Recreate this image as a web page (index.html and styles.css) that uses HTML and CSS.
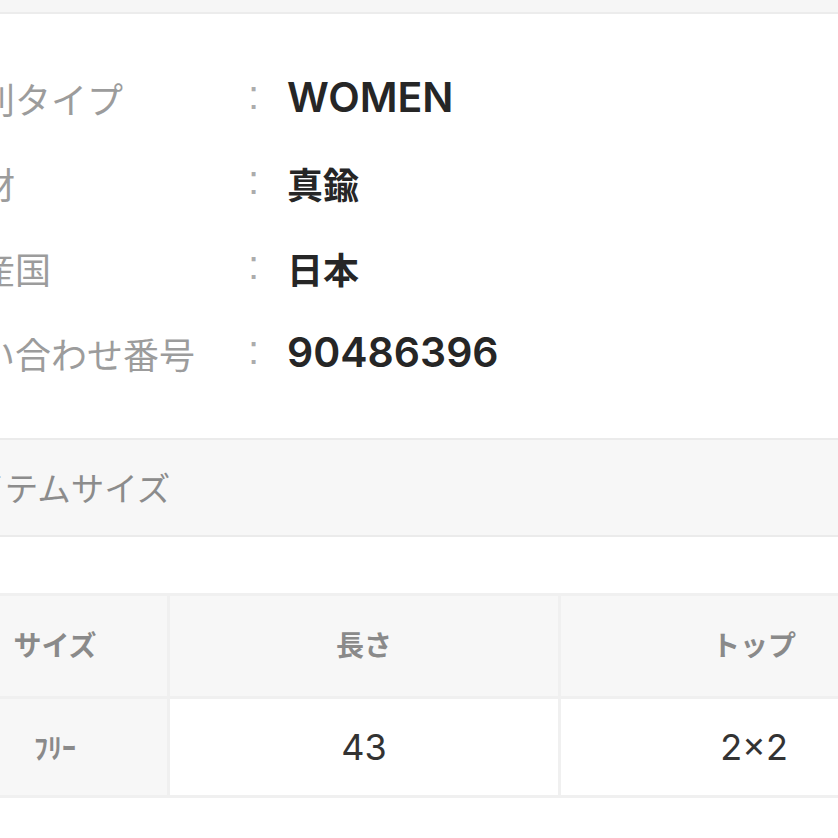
FILE: index.html
```html
<!DOCTYPE html>
<html lang="ja">
<head>
<meta charset="utf-8">
<link rel="stylesheet" href="styles.css">
</head>
<body>
<div class="page">
  <div class="topband"></div>
  <dl class="info">
    <div class="row"><dt class="label">性別タイプ</dt><dd class="colon">:</dd><dd class="value">WOMEN</dd></div>
    <div class="row"><dt class="label">素材</dt><dd class="colon">:</dd><dd class="value cjk">真鍮</dd></div>
    <div class="row"><dt class="label">生産国</dt><dd class="colon">:</dd><dd class="value cjk">日本</dd></div>
    <div class="row"><dt class="label">問い合わせ番号</dt><dd class="colon">:</dd><dd class="value num">90486396</dd></div>
  </dl>
  <h2 class="section-title">アイテムサイズ</h2>
  <table class="size-table">
    <thead>
      <tr><th class="c1">サイズ</th><th class="c2">長さ</th><th class="c3">トップ</th></tr>
    </thead>
    <tbody>
      <tr><th class="c1 size-name">ﾌﾘｰ</th><td class="c2">43</td><td class="c3">2×2</td></tr>
    </tbody>
  </table>
</div>
</body>
</html>
```

FILE: styles.css
```css
html, body {
  margin: 0;
  padding: 0;
  background: #ffffff;
  overflow: hidden;
}
body {
  font-family: "Noto Sans CJK JP", sans-serif;
  width: 838px;
  height: 838px;
}
.page {
  margin-left: -60px;
  width: 1010px;
}
.topband {
  height: 12px;
  background: #f6f6f6;
  border-bottom: 2px solid #ececec;
}
.info {
  margin: 0;
  padding: 41px 0 43px 3px;
}
.row {
  display: grid;
  grid-template-columns: 305px 39px 1fr;
  align-items: center;
  height: 85px;
}
.label {
  font-size: 36px;
  font-weight: 400;
  color: #9c9c9c;
  white-space: nowrap;
}
.colon {
  margin: 0;
  font-family: "Liberation Sans", sans-serif;
  font-size: 40px;
  color: #acacac;
  line-height: 1;
  padding-bottom: 6px;
}
.value {
  margin: 0;
  font-family: "Inter", "Noto Sans CJK JP", sans-serif;
  font-weight: 600;
  font-size: 41px;
  color: #262626;
  line-height: 1;
}
.value.cjk {
  font-family: "Noto Sans CJK JP", sans-serif;
  font-weight: 700;
  font-size: 36px;
}
.section-title {
  margin: 0;
  height: 92px;
  box-sizing: content-box;
  display: flex;
  align-items: center;
  padding: 0 0 3px 0;
  background: #f7f7f7;
  border-top: 2px solid #ebebeb;
  border-bottom: 2px solid #ebebeb;
  font-size: 33.5px;
  font-weight: 400;
  color: #8c8c8c;
}
.size-table {
  margin-top: 56px;
  border-collapse: collapse;
  table-layout: fixed;
  width: 998px;
}
.size-table th,
.size-table td {
  border: 3px solid #f0f0f0;
  text-align: center;
  padding: 0;
}
.size-table thead th {
  height: 96px;
  padding-bottom: 4px;
  background: #f7f7f7;
  font-size: 28px;
  font-weight: 700;
  color: #8a8a8a;
}
.size-table tbody th,
.size-table tbody td {
  height: 96px;
}
.c1 { width: 224px; }
.c2 { width: 388px; }
.c3 { width: 386px; }
.size-table tbody th.size-name {
  background: #f7f7f7;
  font-size: 28px;
  font-weight: 700;
  color: #8a8a8a;
}
.size-table tbody td {
  background: #ffffff;
  font-family: "Inter", sans-serif;
  font-weight: 400;
  font-size: 36px;
  color: #333333;
}
```
